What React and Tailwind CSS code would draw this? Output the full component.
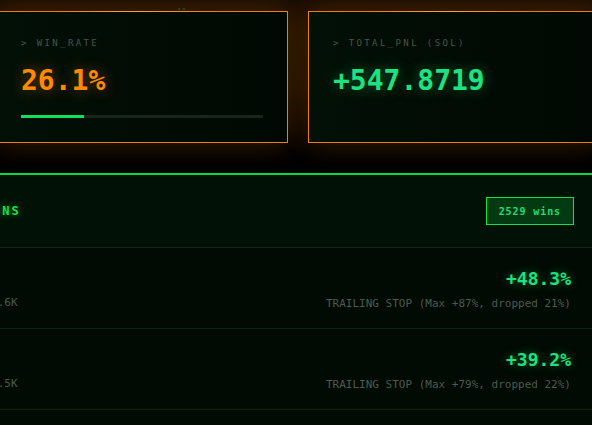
import React from "react";

const wins = [
  { sym: "WIF", mc: "MC $41.6K", pct: "+48.3%", note: "TRAILING STOP (Max +87%, dropped 21%)" },
  { sym: "MEW", mc: "MC $38.5K", pct: "+39.2%", note: "TRAILING STOP (Max +79%, dropped 22%)" },
  { sym: "BOB", mc: "MC $27.1K", pct: "+31.4%", note: "TRAILING STOP (Max +66%, dropped 20%)" },
];

function StatCard({ label, children }) {
  return (
    <div className="relative h-[132px] w-[292px] shrink-0 border border-[#e8810e] bg-gradient-to-r from-[#031006] to-[#010803] px-[24px] pt-[25px] shadow-[0_0_26px_rgba(255,130,0,0.24)]">
      <div className="absolute left-[60px] top-[-1px] h-[1px] w-[160px] bg-gradient-to-r from-transparent via-[#ffa23a] to-transparent"></div>
      <div className="text-[9px] leading-[12px] tracking-[2.4px] text-[#46564a]">{label}</div>
      {children}
    </div>
  );
}

export default function App() {
  return (
    <div className="h-[425px] w-[592px] overflow-hidden bg-[#000300] font-['DejaVu_Sans_Mono',monospace]">
      <div className="relative bg-gradient-to-b from-[#170c03] via-[#120902] to-[#000000] pb-[30px] pt-[11px]">
        <div className="absolute left-[178px] top-[7px] text-[4px] leading-[4px] text-[#1f5a1f]">▪ ▬</div>
        <div className="-ml-[4px] flex gap-[20px]">
          <StatCard label="> WIN_RATE">
            <div className="mt-[14px] text-[28px] font-bold leading-[36px] text-[#ff8a00] [text-shadow:0_0_14px_rgba(255,130,0,0.45)]">
              26.1%
            </div>
            <div className="mt-[16px] h-[3px] w-full bg-[#17261b]">
              <div className="h-full bg-[#13e05a]" style={{ width: "26.1%" }}></div>
            </div>
          </StatCard>
          <StatCard label="> TOTAL_PNL (SOL)">
            <div className="mt-[14px] text-[28px] font-bold leading-[36px] text-[#1de281] [text-shadow:0_0_14px_rgba(20,230,120,0.4)]">
              +547.8719
            </div>
          </StatCard>
        </div>
      </div>

      <div className="border-t-2 border-[#10d63a] bg-[#010a03]">
        <div className="flex items-center justify-between border-b border-[#15261a] bg-[#011106] py-[22px] pr-[18px]">
          <div className="-ml-[90px] text-[12px] font-bold tracking-[2px] text-[#12e44a] [text-shadow:0_0_8px_rgba(20,230,80,0.45)]">
            BIGGEST_WINS
          </div>
          <div className="flex h-[28px] items-center border border-[#14e04c] bg-[#033a12] px-[12px] text-[10px] font-bold tracking-[0.9px] text-[#22dc74]">
            2529 wins
          </div>
        </div>

        {wins.map((w) => (
          <div key={w.sym} className="flex items-start justify-between border-b border-[#0b2610] pb-[17px] pl-0 pr-[21px] pt-[19px]">
            <div className="-ml-[42px] flex flex-col">
              <div className="text-[13px] font-bold leading-[24px] text-[#cfe8d5]">{w.sym}</div>
              <div className="mt-[5px] text-[11px] leading-[14px] text-[#4a5c4e]">{w.mc}</div>
            </div>
            <div className="flex flex-col items-end">
              <div className="text-[18px] font-bold leading-[24px] text-[#1de281] [text-shadow:0_0_10px_rgba(20,230,120,0.45)]">
                {w.pct}
              </div>
              <div className="mt-[6px] text-[11px] leading-[14px] text-[#4a5c4e]">{w.note}</div>
            </div>
          </div>
        ))}
      </div>
    </div>
  );
}
